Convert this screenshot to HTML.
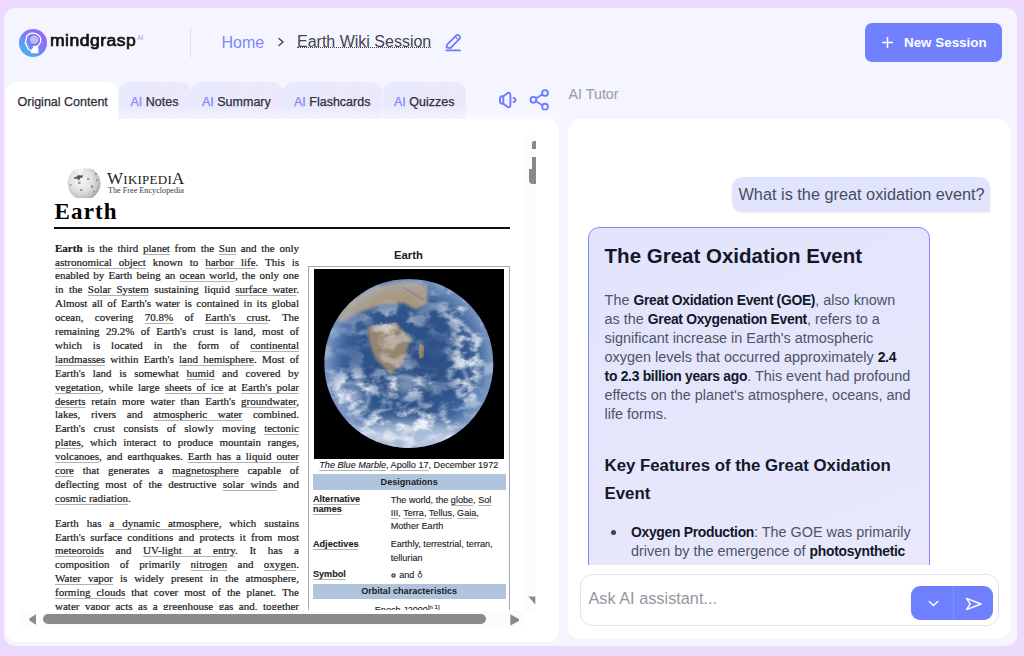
<!DOCTYPE html>
<html><head><meta charset="utf-8">
<style>
*{box-sizing:border-box;margin:0;padding:0}
html,body{width:1024px;height:656px;overflow:hidden;background:#ecdafd;font-family:"Liberation Sans",sans-serif}
.a{position:absolute}
#box{left:4px;top:8px;width:1013px;height:638px;background:#f5f5ff;border-radius:11px}
.t{white-space:nowrap;line-height:1}
/* header */
#logo{left:19px;top:28.5px;width:28px;height:28px;border-radius:50%;background:linear-gradient(40deg,#36bdf3 0%,#5aa0f5 30%,#7c7af6 55%,#a05ef8 100%)}
#brand{left:49.8px;top:33.3px;font-weight:normal;font-size:16px;letter-spacing:0.4px;color:#111;-webkit-text-stroke:0.65px #111;transform:scaleX(1.1);transform-origin:0 0}
#brandai{left:137.2px;top:34.6px;font-size:6.5px;color:#b38ff9}
#div1{left:189.5px;top:27px;width:1.5px;height:31px;background:#dfe0ee}
#home{left:221.5px;top:34.5px;font-size:16px;color:#7f86f8}
#chev{left:276px;top:36px}
#sess{left:297px;top:36px;height:11.7px;line-height:12px;font-size:16px;color:#3f4452;border-bottom:1.6px dotted #444}
#pen{left:443px;top:32px}
#newbtn{left:864.5px;top:23px;width:137.5px;height:38.5px;background:#7080fe;border-radius:7px}
#plus{left:882px;top:37px}
#newtxt{left:904px;top:36px;font-size:13.4px;font-weight:bold;color:#fff}
/* tabs */
.tab{top:82px;height:38px;border-radius:11px 11px 0 0;background:linear-gradient(100deg,#e7e9fd 0%,#ebe9fc 55%,#efe7fb 100%)}
.tab span{position:absolute;top:13.8px;font-size:12.5px;color:#2b2f3a;-webkit-text-stroke:0.25px #2b2f3a;white-space:nowrap;line-height:1}
.tab span i{font-style:normal;color:#8487f8;-webkit-text-stroke:0.25px #8487f8}
#tab0{left:6px;width:112px;background:#fff}
#tab1{left:118.5px;width:72px}
#tab2{left:191px;width:91.5px}
#tab3{left:283px;width:99px}
#tab4{left:383px;width:83px}
#tutor{left:568.5px;top:86.8px;font-size:14.3px;color:#9da1ac;-webkit-text-stroke:0.15px #9da1ac}
/* panels */
#lp{left:6px;top:119px;width:553px;height:523px;background:#fff;border-radius:0 12px 12px 12px;overflow:hidden}
#rp{left:568px;top:119px;width:441.5px;height:520px;background:#fff;border-radius:12px}

/* doc */
#doc{left:6px;top:119px;width:522px;height:491px;overflow:hidden;color:#202122}
.wl{position:absolute;left:49px;width:244px;font-family:"Liberation Serif",serif;font-size:11px;line-height:13.9px;height:13.9px;white-space:nowrap;text-align:justify;text-align-last:justify;color:#1a1a1a;-webkit-text-stroke:0.2px #1a1a1a}
.wl.last{text-align:left;text-align-last:left}
.wl u{text-decoration:underline;text-decoration-skip-ink:none;text-decoration-color:#aeb1b6;text-underline-offset:2.4px;text-decoration-thickness:1px}
.wl b{font-weight:bold}
#wtitle{left:48.6px;top:80.8px;font-family:"Liberation Serif",serif;font-weight:bold;font-size:23px;letter-spacing:1.1px;color:#000;line-height:1}
#wrule{left:48px;top:108px;width:455.6px;height:2px;background:#111}
#wglobe{left:61px;top:49px;width:33px;height:31px;border-radius:50%;background:radial-gradient(circle at 45% 40%,#f4f4f4 0%,#dcdcdc 45%,#b9b9b9 80%,#a6a6a6 100%)}
#wname{left:101px;top:51px;font-family:"Liberation Serif",serif;color:#222;line-height:1;white-space:nowrap}
#wsub{left:102px;top:67.5px;font-family:"Liberation Serif",serif;font-size:8.2px;color:#3a3a3a;line-height:1;white-space:nowrap}
#ibt{left:388px;top:131px;font-weight:bold;font-size:11.3px;color:#202122;line-height:1}
#ibox{left:302px;top:146.5px;width:201.6px;height:400px;border:1px solid #a2a9b1;background:#fff}
#img{left:307.7px;top:150px;width:190.3px;height:189.5px;background:#000;overflow:hidden}
.ib{position:absolute;font-size:9.1px;line-height:1;white-space:nowrap;color:#202122;-webkit-text-stroke:0.12px #202122}
.ib u{text-decoration:underline;text-decoration-skip-ink:none;text-decoration-color:#b0b3b8;text-underline-offset:1.8px;text-decoration-thickness:1px}
.band{position:absolute;left:306.5px;width:193.3px;background:#b0c4de;font-weight:bold;font-size:9.1px;text-align:center;color:#202122;line-height:1}
/* scrollbars */
.sb{position:absolute;background:#8a8a8a}

/* chat */
#ubub{left:732.3px;top:176.8px;width:258px;height:35.5px;background:#e1e4fd;border-radius:11px 11px 0 11px;box-shadow:0 1px 2px rgba(80,80,120,0.12)}
#utxt{left:738.5px;top:186.3px;font-size:16.3px;color:#474d5b}
#chatclip{left:568px;top:119px;width:441.5px;height:446.2px;overflow:hidden}
#card{left:19.7px;top:108px;width:342.3px;height:420px;border:1px solid #8289f6;border-radius:11px;background:linear-gradient(160deg,#e2e4fd 0%,#e6e7fc 60%,#ebe9fb 100%)}
.ct{position:absolute;white-space:nowrap;color:#111827}
.cp{position:absolute;white-space:nowrap;font-size:14.42px;line-height:19.1px;color:#4b5563}
.cp b{font-size:13.9px;letter-spacing:-0.3px;color:#111827}
#inp{left:579.5px;top:574.2px;width:419px;height:52px;border:1px solid #e3e4e9;border-radius:12px;background:#fff}
#ph{left:588.5px;top:590.2px;font-size:16.3px;color:#92979f}
#btns{left:910.5px;top:585.7px;width:82.5px;height:34.5px;background:#6f80fe;border-radius:9px}
#bdiv{left:953.3px;top:585.7px;width:1px;height:34.5px;background:#8391fb}
</style></head><body>
<div class="a" id="box"></div>
<div class="a" id="logo"><svg width="28" height="28" viewBox="0 0 28 28" style="position:absolute;left:0;top:0"><path d="M7.8 7.2 C9.5 4.6 13 3.8 16 4.4 C20 5.3 22.6 8.8 21.6 12.6 C21.1 14.6 19.3 16 18.6 17.6 L18.8 23.5 L12.6 23.5 L12.2 21.2 C10.6 21.2 9.2 20.6 8.7 19.2 L8.3 17.3 L7 16.6 L7.6 15 L6.2 14.1 C6.6 12.2 7.1 11 7.3 9.6 Z" fill="none" stroke="#fff" stroke-width="1.3" stroke-linejoin="round"/><path d="M14.5 17 L18.6 16.5 L18.8 23.5 L13 23.5 L12.6 21 Z" fill="#fff"/><circle cx="15.2" cy="10.6" r="4.2" fill="#d9d2fb" opacity="0.8"/><path d="M12.5 10 Q14 8 16 9.5 Q18 8.5 18.5 11 M13 12 Q15 13 17 12" fill="none" stroke="#a99cf5" stroke-width="0.8"/></svg></div>
<div class="a t" id="brand">mindgrasp</div>
<div class="a t" id="brandai">AI</div>
<div class="a" id="div1"></div>
<div class="a t" id="home">Home</div>
<svg class="a" id="chev" width="10" height="12" viewBox="0 0 10 12"><path d="M3 2.5 L7 6 L3 9.5" fill="none" stroke="#444" stroke-width="1.3" stroke-linecap="round" stroke-linejoin="round"/></svg>
<div class="a t" id="sess">Earth Wiki Session</div>
<svg class="a" id="pen" width="20" height="20" viewBox="0 0 20 20"><path d="M3.6 15.6 L4.1 12.6 L12.9 3.8 Q14.6 2.1 16.3 3.8 Q18 5.5 16.3 7.2 L7.5 16 Z" fill="none" stroke="#6d7cfc" stroke-width="1.8" stroke-linejoin="round"/><path d="M12.6 5.2 L14.9 7.5" stroke="#6d7cfc" stroke-width="1.2"/><path d="M3.2 18.4 H17" stroke="#6d7cfc" stroke-width="1.9" stroke-linecap="round"/></svg>
<div class="a" id="newbtn"></div>
<svg class="a" id="plus" width="11" height="11" viewBox="0 0 11 11"><path d="M5.5 0.5 V10.5 M0.5 5.5 H10.5" stroke="#fff" stroke-width="1.5" stroke-linecap="round"/></svg>
<div class="a t" id="newtxt">New Session</div>

<div class="a tab" id="tab0"><span style="left:11.5px">Original Content</span></div>
<div class="a tab" id="tab1"><span style="left:12px"><i>AI</i> Notes</span></div>
<div class="a tab" id="tab2"><span style="left:11px"><i>AI</i> Summary</span></div>
<div class="a tab" id="tab3"><span style="left:11px"><i>AI</i> Flashcards</span></div>
<div class="a tab" id="tab4"><span style="left:11px"><i>AI</i> Quizzes</span></div>

<svg class="a" style="left:497px;top:90px" width="22" height="20" viewBox="0 0 22 20"><path d="M6.3 6.3 H5 Q2.9 6.3 2.9 10 Q2.9 13.7 5 13.7 H6.3 L10.2 16.6 Q13.4 18.6 13.4 14.5 V5.5 Q13.4 1.4 10.2 3.4 Z" fill="none" stroke="#6b7bfd" stroke-width="1.9" stroke-linejoin="round"/><path d="M6.3 6.3 V13.7" stroke="#6b7bfd" stroke-width="1.9"/><path d="M16.6 8 Q18.6 8.4 18.6 10 Q18.6 11.6 16.6 12" fill="none" stroke="#6b7bfd" stroke-width="2" stroke-linecap="round"/></svg>
<svg class="a" style="left:528px;top:87px" width="23" height="25" viewBox="0 0 23 25"><g fill="none" stroke="#6b7bfd" stroke-width="1.9"><circle cx="17" cy="6" r="2.9"/><circle cx="5.4" cy="12.8" r="2.9"/><circle cx="17" cy="19.7" r="2.9"/><path d="M7.9 11.3 L14.5 7.5 M7.9 14.3 L14.5 18.2"/></g></svg>
<div class="a" style="left:6px;top:106px;width:553px;height:13px;background:linear-gradient(to bottom,rgba(255,255,255,0),rgba(255,255,255,0.45))"></div>
<div class="a t" id="tutor">AI Tutor</div>
<div class="a" id="lp"></div>
<div class="a" id="rp"></div>
<div class="a" id="doc">
<svg class="a" style="left:61px;top:48.3px" width="34" height="31" viewBox="0 0 34 31"><defs><radialGradient id="wg" cx="42%" cy="42%" r="60%"><stop offset="0" stop-color="#f6f6f6"/><stop offset="0.55" stop-color="#e2e2e2"/><stop offset="0.85" stop-color="#c4c4c4"/><stop offset="1" stop-color="#a8a8a8"/></radialGradient><clipPath id="wc"><rect x="0" y="1.2" width="34" height="30"/></clipPath></defs>
<g clip-path="url(#wc)"><circle cx="17" cy="16.3" r="16.5" fill="url(#wg)"/></g>
<path d="M7 10.5 L10 9.5 L11 8 L13 8.5 L16 8.2 L15.5 10.5 L13 11 L12.5 13 L11 13.2 L10.5 11.5 L7.5 12 Z" fill="#555"/>
<g fill="#8a8a8a" opacity="0.8"><rect x="11" y="14.5" width="2.5" height="2.5"/><rect x="20" y="11" width="2.5" height="2"/><rect x="24" y="18" width="2" height="3"/><rect x="13" y="22" width="2.5" height="2"/><rect x="28" y="6" width="2" height="2"/><rect x="3" y="17" width="1.5" height="2"/><rect x="29" y="12" width="1.5" height="2.5"/><rect x="26" y="24" width="2" height="1.5"/></g>
<rect x="0" y="0" width="34" height="1.5" fill="#fff"/><path d="M6 1 L17 1 L15 6 L12 7 L9 5 Z" fill="#fff" opacity="0.6"/></svg>
<div class="a" id="wname" style="letter-spacing:0.25px"><span style="font-size:17px">W</span><span style="font-size:13px">IKIPEDI</span><span style="font-size:17px">A</span></div>
<div class="a" id="wsub">The Free Encyclopedia</div>
<div class="a" id="wtitle">Earth</div>
<div class="a" id="wrule"></div>
<div class="wl" style="top:122.6px"><b>Earth</b> is the third <u>planet</u> from the <u>Sun</u> and the only</div>
<div class="wl" style="top:136.5px"><u>astronomical object</u> known to <u>harbor life</u>. This is</div>
<div class="wl" style="top:150.4px">enabled by Earth being an <u>ocean world</u>, the only one</div>
<div class="wl" style="top:164.3px">in the <u>Solar System</u> sustaining liquid <u>surface water</u>.</div>
<div class="wl" style="top:178.2px">Almost all of Earth's water is contained in its global</div>
<div class="wl" style="top:192.1px">ocean, covering <u>70.8%</u> of <u>Earth's crust</u>. The</div>
<div class="wl" style="top:206.0px">remaining 29.2% of Earth's crust is land, most of</div>
<div class="wl" style="top:219.9px">which is located in the form of <u>continental</u></div>
<div class="wl" style="top:233.8px"><u>landmasses</u> within Earth's <u>land hemisphere</u>. Most of</div>
<div class="wl" style="top:247.7px">Earth's land is somewhat <u>humid</u> and covered by</div>
<div class="wl" style="top:261.6px"><u>vegetation</u>, while large <u>sheets of ice</u> at <u>Earth's polar</u></div>
<div class="wl" style="top:275.5px"><u>deserts</u> retain more water than Earth's <u>groundwater</u>,</div>
<div class="wl" style="top:289.4px">lakes, rivers and <u>atmospheric water</u> combined.</div>
<div class="wl" style="top:303.3px">Earth's crust consists of slowly moving <u>tectonic</u></div>
<div class="wl" style="top:317.2px"><u>plates</u>, which interact to produce mountain ranges,</div>
<div class="wl" style="top:331.1px"><u>volcanoes</u>, and earthquakes. <u>Earth has a liquid outer</u></div>
<div class="wl" style="top:345.0px"><u>core</u> that generates a <u>magnetosphere</u> capable of</div>
<div class="wl" style="top:358.9px">deflecting most of the destructive <u>solar winds</u> and</div>
<div class="wl last" style="top:372.8px"><u>cosmic radiation</u>.</div>
<div class="wl" style="top:397.6px">Earth has <u>a dynamic atmosphere</u>, which sustains</div>
<div class="wl" style="top:411.5px">Earth's surface conditions and protects it from most</div>
<div class="wl" style="top:425.4px"><u>meteoroids</u> and <u>UV-light at entry</u>. It has a</div>
<div class="wl" style="top:439.3px">composition of primarily <u>nitrogen</u> and <u>oxygen</u>.</div>
<div class="wl" style="top:453.2px"><u>Water vapor</u> is widely present in the atmosphere,</div>
<div class="wl" style="top:467.1px"><u>forming clouds</u> that cover most of the planet. The</div>
<div class="wl" style="top:481.0px">water vapor acts as a greenhouse gas and, together</div>
<div class="a t" id="ibt">Earth</div>
<div class="a" id="ibox"></div>
<div class="a" id="img"><svg width="190.3" height="189.5" viewBox="0 0 190.3 189.5" style="position:absolute;left:0;top:0">
<defs>
<radialGradient id="oc" cx="50%" cy="48%" r="52%">
<stop offset="0" stop-color="#2a4c82"/><stop offset="0.6" stop-color="#2f548b"/><stop offset="0.86" stop-color="#466ba2"/><stop offset="1" stop-color="#6f8dbb"/>
</radialGradient>
<radialGradient id="haze" cx="50%" cy="50%" r="50%">
<stop offset="0.78" stop-color="#a9bedd" stop-opacity="0"/><stop offset="0.97" stop-color="#a9bedd" stop-opacity="0.35"/><stop offset="1" stop-color="#a9bedd" stop-opacity="0.15"/>
</radialGradient>
<clipPath id="cl"><circle cx="94.8" cy="94.4" r="84.5"/></clipPath>
<filter id="cloud" x="0" y="0" width="100%" height="100%">
 <feTurbulence type="fractalNoise" baseFrequency="0.06 0.09" numOctaves="5" seed="4"/>
 <feColorMatrix type="matrix" values="0 0 0 0 0.93  0 0 0 0 0.95  0 0 0 0 0.98  4.2 0 0 0 -1.8" />
</filter>
<filter id="b1" x="-50%" y="-50%" width="200%" height="200%"><feGaussianBlur stdDeviation="1.8"/></filter>
<filter id="b2" x="-50%" y="-50%" width="200%" height="200%"><feGaussianBlur stdDeviation="6"/></filter>
<filter id="b0" x="-50%" y="-50%" width="200%" height="200%"><feGaussianBlur stdDeviation="0.7"/></filter>
<mask id="cm">
 <rect width="190" height="190" fill="#5a5a5a"/>
 <g filter="url(#b2)">
  <path fill="#000" d="M20 48 L40 28 L62 17 L90 12 L114 16 L114 34 L100 42 L88 34 L68 36 L44 46 L26 58 Z"/>
  <ellipse cx="118" cy="90" rx="18" ry="28" fill="#0a0a0a"/>
  <ellipse cx="128" cy="130" rx="10" ry="10" fill="#222"/>
  <ellipse cx="36" cy="82" rx="14" ry="18" fill="#222"/>
  <ellipse cx="80" cy="54" rx="18" ry="10" fill="#bbb"/>
  <ellipse cx="93" cy="115" rx="22" ry="10" fill="#fff"/>
  <ellipse cx="38" cy="124" rx="22" ry="18" fill="#fff"/>
  <ellipse cx="92" cy="160" rx="52" ry="18" fill="#fff"/>
  <ellipse cx="155" cy="92" rx="14" ry="44" fill="#ddd"/>
  <ellipse cx="142" cy="42" rx="14" ry="10" fill="#ccc"/>
 </g>
</mask>
</defs>
<circle cx="94.8" cy="94.4" r="84.5" fill="url(#oc)"/>
<g clip-path="url(#cl)">
 <filter id="b3" x="-50%" y="-50%" width="200%" height="200%"><feGaussianBlur stdDeviation="3"/></filter><path filter="url(#b1)" fill="#a8977f" d="M22 46 L40 29 L62 18 L89 12 L113 16 L114 33 L102 41 L90 34 L70 35 L46 43 L26 54 Z"/>
 <path filter="url(#b0)" fill="none" stroke="#4a6a98" stroke-width="1.2" opacity="0.5" d="M88 18 L110 31"/>
 <path filter="url(#b1)" fill="#958470" d="M53.3 58 L81.1 54.1 L96.9 70 L89 93.7 L77.1 105.6 L61.3 89.8 L55.3 73.9 Z"/>
 <path filter="url(#b0)" fill="#8c7b67" d="M106 74 L110 77 L109.5 88 L105.5 90 L104.5 81 Z"/>
 <rect width="190.3" height="189.5" filter="url(#cloud)" mask="url(#cm)"/>
 <g filter="url(#b2)" fill="#e6ecf5" opacity="0.65">
  <ellipse cx="92" cy="166" rx="55" ry="14"/>
  <ellipse cx="93" cy="116" rx="14" ry="6"/>
  <ellipse cx="38" cy="128" rx="10" ry="10"/>
 </g>
 <g filter="url(#b1)" fill="none" stroke="#eef2f8" stroke-width="3" opacity="0.45">
  <path d="M22 118 Q40 108 54 122 Q58 136 44 142"/>
  <path d="M140 88 Q154 102 158 130"/>
  <path d="M130 46 Q150 52 166 74"/>
  <path d="M74 110 Q96 102 114 120"/>
 </g>
</g>
<circle cx="94.8" cy="94.4" r="84.5" fill="url(#haze)"/>
</svg></div>
<div class="ib" style="left:313.3px;top:342px"><u><i>The Blue Marble</i></u>, <u>Apollo 17</u>, December 1972</div>
<div class="band" style="top:355px;height:16.4px;padding-top:4.1px">Designations</div>
<div class="ib" style="left:307px;top:374.7px;font-weight:bold;line-height:10.7px"><u>Alternative</u><br><u>names</u></div>
<div class="ib" style="left:384.7px;top:374.7px;line-height:13.3px"><span>The world, the <u>globe</u>, <u>Sol</u></span><br><span><u>III</u>, <u>Terra</u>, <u>Tellus</u>, <u>Gaia</u>,</span><br>Mother Earth</div>
<div class="ib" style="left:307px;top:420.5px;font-weight:bold"><u>Adjectives</u></div>
<div class="ib" style="left:384.7px;top:419.1px;line-height:13.5px">Earthly, terrestrial, terran,<br>tellurian</div>
<div class="ib" style="left:307px;top:450.5px;font-weight:bold"><u>Symbol</u></div>
<div class="ib" style="left:384.7px;top:450.5px"><svg width="5" height="5" viewBox="0 0 5 5" style="vertical-align:-0.5px;margin-right:3.5px"><circle cx="2.5" cy="2.5" r="2" fill="#444" stroke="#444" stroke-width="0.6"/><path d="M2.5 0.6 V4.4 M0.6 2.5 H4.4" stroke="#ccc" stroke-width="0.5"/></svg>and<svg width="6" height="8" viewBox="0 0 6 8" style="vertical-align:-0.5px;margin-left:3px"><circle cx="3" cy="5.3" r="2" fill="none" stroke="#333" stroke-width="0.9"/><path d="M3 0.5 V3.3 M1.6 1.8 H4.4" stroke="#333" stroke-width="0.8"/></svg></div>
<div class="band" style="top:465px;height:15.2px;padding-top:3px"><u style="text-decoration:none">Orbital characteristics</u></div>
<div class="ib" style="left:368.8px;top:485px">Epoch J2000<sup style="font-size:6px">[n 1]</sup></div>
</div>

<div class="a" id="ubub"></div>
<div class="a t" id="utxt">What is the great oxidation event?</div>
<div class="a" id="chatclip">
 <div class="a" id="card"></div>
 <div class="ct t" style="left:36.6px;top:126.6px;font-size:20.5px;font-weight:bold">The Great Oxidation Event</div>
 <div class="cp" style="left:36.6px;top:171.75px">The <b>Great Oxidation Event (GOE)</b>, also known<br>as the <b>Great Oxygenation Event</b>, refers to a<br>significant increase in Earth's atmospheric<br>oxygen levels that occurred approximately <b>2.4</b><br><b>to 2.3 billion years ago</b>. This event had profound<br>effects on the planet's atmosphere, oceans, and<br>life forms.</div>
 <div class="ct" style="left:36.6px;top:333.1px;font-size:16.8px;font-weight:bold;line-height:27.5px">Key Features of the Great Oxidation<br>Event</div>
 <div class="a" style="left:42.6px;top:411.3px;width:5px;height:5px;border-radius:50%;background:#3b4250"></div>
 <div class="cp" style="left:63px;top:404.4px"><b>Oxygen Production</b>: The GOE was primarily<br>driven by the emergence of <b>photosynthetic</b><br><b>organisms</b>, particularly cyanobacteria</div>
</div>
<div class="a" id="inp"></div>
<div class="a t" id="ph">Ask AI assistant...</div>
<div class="a" id="btns"></div>
<div class="a" id="bdiv"></div>
<svg class="a" style="left:927px;top:598.5px" width="13" height="10" viewBox="0 0 13 10"><path d="M2.3 2.4 L6.5 6.6 L10.7 2.4" fill="none" stroke="#fff" stroke-width="1.4" stroke-linecap="round" stroke-linejoin="round"/></svg>
<svg class="a" style="left:964px;top:595.5px" width="19" height="16" viewBox="0 0 19 16"><path d="M2.6 2.4 L17 8 L2.6 13.6 L6.2 8 Z" fill="none" stroke="#fff" stroke-width="1.4" stroke-linejoin="round" stroke-linecap="round"/></svg>
<!-- scrollbars -->
<div class="a" style="left:525px;top:135px;width:11px;height:475px;background:rgba(0,0,0,0.01)"></div>
<div class="a" style="left:20px;top:611px;width:505px;height:16px;background:rgba(0,0,0,0.01)"></div>

<div class="sb" style="left:532px;top:141px;width:4px;height:8.3px;border-radius:2px 0 0 0"></div>
<div class="sb" style="left:532px;top:157px;width:4px;height:27.4px"></div>
<div class="sb" style="left:528.7px;top:169px;width:7.3px;height:15.4px;border-radius:0 0 0 4px"></div>
<svg class="a" style="left:528px;top:595.5px" width="8" height="9" viewBox="0 0 8 9"><path d="M0.3 0.5 H7.3 V8.6 Z" fill="#8a8a8a"/></svg>
<svg class="a" style="left:28.5px;top:613.8px" width="8" height="11" viewBox="0 0 8 11"><path d="M7 0.3 V10.8 L0.3 6.5 V4.6 Z" fill="#8a8a8a"/></svg>
<div class="sb" style="left:43.3px;top:614px;width:443px;height:10.3px;border-radius:5.2px"></div>
<svg class="a" style="left:510.3px;top:613.5px" width="10" height="12" viewBox="0 0 10 12"><path d="M0.3 0.2 L9 5 V7 L0.3 11.6 Z" fill="#8a8a8a"/></svg>

</body></html>
